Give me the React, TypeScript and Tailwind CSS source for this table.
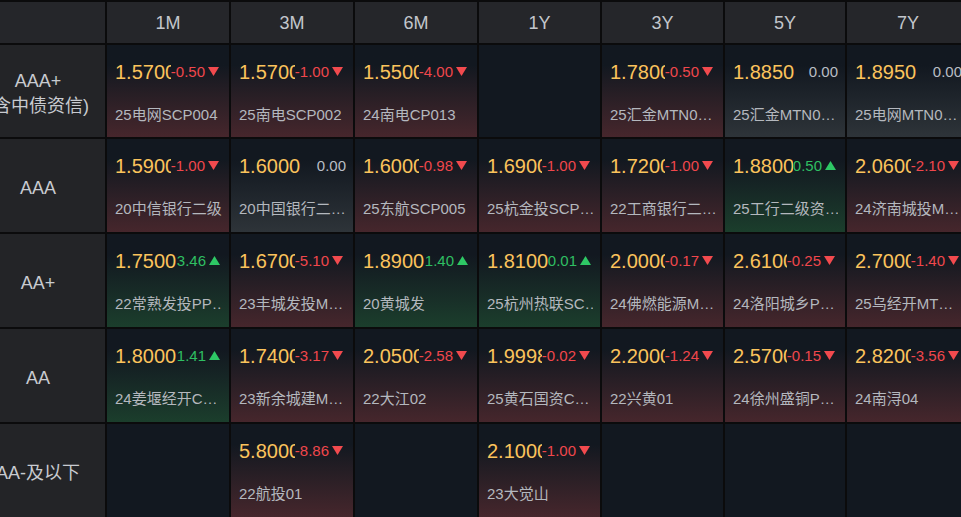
import React from 'react';

type Dir = 'up' | 'down' | 'flat';
type Cell = { v: string; c: string; d: Dir; n: string } | null;

const cols = ['1M', '3M', '6M', '1Y', '3Y', '5Y', '7Y'];

const rows: { label: string[]; cells: Cell[] }[] = [
  {
    label: ['AAA+', '(含中债资信)'],
    cells: [
      { v: '1.5700', c: '-0.50', d: 'down', n: '25电网SCP004' },
      { v: '1.5700', c: '-1.00', d: 'down', n: '25南电SCP002' },
      { v: '1.5500', c: '-4.00', d: 'down', n: '24南电CP013' },
      null,
      { v: '1.7800', c: '-0.50', d: 'down', n: '25汇金MTN0…' },
      { v: '1.8850', c: '0.00', d: 'flat', n: '25汇金MTN0…' },
      { v: '1.8950', c: '0.00', d: 'flat', n: '25电网MTN0…' },
    ],
  },
  {
    label: ['AAA'],
    cells: [
      { v: '1.5900', c: '-1.00', d: 'down', n: '20中信银行二级' },
      { v: '1.6000', c: '0.00', d: 'flat', n: '20中国银行二…' },
      { v: '1.6000', c: '-0.98', d: 'down', n: '25东航SCP005' },
      { v: '1.6900', c: '-1.00', d: 'down', n: '25杭金投SCP…' },
      { v: '1.7200', c: '-1.00', d: 'down', n: '22工商银行二…' },
      { v: '1.8800', c: '0.50', d: 'up', n: '25工行二级资…' },
      { v: '2.0600', c: '-2.10', d: 'down', n: '24济南城投M…' },
    ],
  },
  {
    label: ['AA+'],
    cells: [
      { v: '1.7500', c: '3.46', d: 'up', n: '22常熟发投PP…' },
      { v: '1.6700', c: '-5.10', d: 'down', n: '23丰城发投M…' },
      { v: '1.8900', c: '1.40', d: 'up', n: '20黄城发' },
      { v: '1.8100', c: '0.01', d: 'up', n: '25杭州热联SC…' },
      { v: '2.0000', c: '-0.17', d: 'down', n: '24佛燃能源M…' },
      { v: '2.6100', c: '-0.25', d: 'down', n: '24洛阳城乡P…' },
      { v: '2.7000', c: '-1.40', d: 'down', n: '25乌经开MT…' },
    ],
  },
  {
    label: ['AA'],
    cells: [
      { v: '1.8000', c: '1.41', d: 'up', n: '24姜堰经开C…' },
      { v: '1.7400', c: '-3.17', d: 'down', n: '23新余城建M…' },
      { v: '2.0500', c: '-2.58', d: 'down', n: '22大江02' },
      { v: '1.9998', c: '-0.02', d: 'down', n: '25黄石国资C…' },
      { v: '2.2000', c: '-1.24', d: 'down', n: '22兴黄01' },
      { v: '2.5700', c: '-0.15', d: 'down', n: '24徐州盛铜P…' },
      { v: '2.8200', c: '-3.56', d: 'down', n: '24南浔04' },
    ],
  },
  {
    label: ['AA-及以下'],
    cells: [
      null,
      { v: '5.8000', c: '-8.86', d: 'down', n: '22航投01' },
      null,
      { v: '2.1000', c: '-1.00', d: 'down', n: '23大觉山' },
      null,
      null,
      null,
    ],
  },
];

const bgByDir: Record<Dir, string> = {
  down: 'bg-linear-to-b from-[#121820] from-[22%] to-[#46262c]',
  up: 'bg-linear-to-b from-[#121820] from-[22%] to-[#1b3e2c]',
  flat: 'bg-linear-to-b from-[#121820] from-[22%] to-[#2e3439]',
};

const changeColor: Record<Dir, string> = {
  down: 'text-[#f0474c]',
  up: 'text-[#2fbf62]',
  flat: 'text-[#b9bec5]',
};

function Tri({ d }: { d: Dir }) {
  if (d === 'flat') return null;
  if (d === 'down')
    return (
      <svg width="11" height="9" viewBox="0 0 11 9" className="-translate-y-[1px] mr-[3px]">
        <polygon points="0,0 11,0 5.5,9" fill="#f24a4e" />
      </svg>
    );
  return (
    <svg width="11" height="9" viewBox="0 0 11 9" className="-translate-y-[1px] mr-[2px]">
      <polygon points="5.5,0 11,9 0,9" fill="#2ec865" />
    </svg>
  );
}

function DataCell({ cell }: { cell: Cell }) {
  if (!cell) return <div className="bg-[#121820]" />;
  return (
    <div className={`${bgByDir[cell.d]} pl-[8px] pr-[7px] pt-[15px] overflow-hidden`}>
      <div className="flex items-center h-[24px]">
        <span className="flex-1 min-w-0 overflow-hidden whitespace-nowrap text-[20px] leading-[24px] text-[#fbc35c]">
          {cell.v}
        </span>
        <span
          className={`shrink-0 flex items-center gap-[3px] text-[15px] leading-[24px] whitespace-nowrap ${changeColor[cell.d]}`}
        >
          <span>{cell.c}</span>
          <Tri d={cell.d} />
        </span>
      </div>
      <div className="mt-[21px] h-[20px] leading-[20px] text-[15px] text-[#b4b8be] whitespace-nowrap overflow-hidden">
        {cell.n}
      </div>
    </div>
  );
}

export default function App() {
  return (
    <div className="w-[961px] h-[517px] overflow-hidden bg-[#0b0b0c] font-['Liberation_Sans','Noto_Sans_CJK_SC',sans-serif]">
      <div className="grid grid-cols-[105px_122px_122px_122px_121px_121px_120px_122px] grid-rows-[41px_92px_93px_93px_93px_93px] gap-[2px] pt-[2px] w-[969px]">
        <div className="bg-[#25262a]" />
        {cols.map((c) => (
          <div
            key={c}
            className="bg-[#25262a] flex items-center justify-center pt-[2px] text-[18px] text-[#c3c6cc]"
          >
            {c}
          </div>
        ))}
        {rows.map((r, ri) => (
          <React.Fragment key={ri}>
            <div className="bg-[#232427] flex flex-col items-center justify-center pr-[29px] pt-[5px] text-[18px] leading-[25px] text-[#c8cbd0] whitespace-nowrap overflow-hidden">
              {r.label.map((l) => (
                <div key={l} className="whitespace-nowrap">
                  {l}
                </div>
              ))}
            </div>
            {r.cells.map((cell, ci) => (
              <DataCell key={ci} cell={cell} />
            ))}
          </React.Fragment>
        ))}
      </div>
    </div>
  );
}
